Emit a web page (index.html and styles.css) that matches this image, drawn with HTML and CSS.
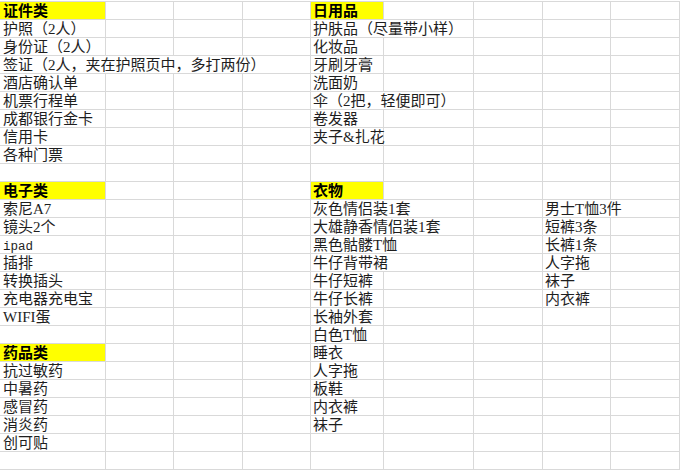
FILE: index.html
```html
<!DOCTYPE html>
<html lang="zh-CN">
<head>
<meta charset="utf-8">
<title>旅行清单</title>
<link rel="stylesheet" href="styles.css">
</head>
<body>
<div class="sheet">
<div class="c a h">证件类</div><div class="c"></div><div class="c"></div><div class="c"></div><div class="c h">日用品</div><div class="c"></div><div class="c"></div><div class="c"></div><div class="c"></div>
<div class="c a">护照（2人）</div><div class="c"></div><div class="c"></div><div class="c"></div><div class="c s2">护肤品（尽量带小样）</div><div class="c"></div><div class="c"></div><div class="c"></div>
<div class="c a">身份证（2人）</div><div class="c"></div><div class="c"></div><div class="c"></div><div class="c">化妆品</div><div class="c"></div><div class="c"></div><div class="c"></div><div class="c"></div>
<div class="c a s4">签证（2人，夹在护照页中，多打两份）</div><div class="c">牙刷牙膏</div><div class="c"></div><div class="c"></div><div class="c"></div><div class="c"></div>
<div class="c a">酒店确认单</div><div class="c"></div><div class="c"></div><div class="c"></div><div class="c">洗面奶</div><div class="c"></div><div class="c"></div><div class="c"></div><div class="c"></div>
<div class="c a">机票行程单</div><div class="c"></div><div class="c"></div><div class="c"></div><div class="c s2">伞（2把，轻便即可）</div><div class="c"></div><div class="c"></div><div class="c"></div>
<div class="c a">成都银行金卡</div><div class="c"></div><div class="c"></div><div class="c"></div><div class="c">卷发器</div><div class="c"></div><div class="c"></div><div class="c"></div><div class="c"></div>
<div class="c a">信用卡</div><div class="c"></div><div class="c"></div><div class="c"></div><div class="c">夹子&amp;扎花</div><div class="c"></div><div class="c"></div><div class="c"></div><div class="c"></div>
<div class="c a">各种门票</div><div class="c"></div><div class="c"></div><div class="c"></div><div class="c"></div><div class="c"></div><div class="c"></div><div class="c"></div><div class="c"></div>
<div class="c a"></div><div class="c"></div><div class="c"></div><div class="c"></div><div class="c"></div><div class="c"></div><div class="c"></div><div class="c"></div><div class="c"></div>
<div class="c a h">电子类</div><div class="c"></div><div class="c"></div><div class="c"></div><div class="c h">衣物</div><div class="c"></div><div class="c"></div><div class="c"></div><div class="c"></div>
<div class="c a">索尼A7</div><div class="c"></div><div class="c"></div><div class="c"></div><div class="c s2">灰色情侣装1套</div><div class="c"></div><div class="c s2">男士T恤3件</div>
<div class="c a">镜头2个</div><div class="c"></div><div class="c"></div><div class="c"></div><div class="c s2">大雄静香情侣装1套</div><div class="c"></div><div class="c">短裤3条</div><div class="c"></div>
<div class="c a"><span class="mono">ipad</span></div><div class="c"></div><div class="c"></div><div class="c"></div><div class="c s2">黑色骷髅T恤</div><div class="c"></div><div class="c">长裤1条</div><div class="c"></div>
<div class="c a">插排</div><div class="c"></div><div class="c"></div><div class="c"></div><div class="c s2">牛仔背带裙</div><div class="c"></div><div class="c">人字拖</div><div class="c"></div>
<div class="c a">转换插头</div><div class="c"></div><div class="c"></div><div class="c"></div><div class="c">牛仔短裤</div><div class="c"></div><div class="c"></div><div class="c">袜子</div><div class="c"></div>
<div class="c a">充电器充电宝</div><div class="c"></div><div class="c"></div><div class="c"></div><div class="c">牛仔长裤</div><div class="c"></div><div class="c"></div><div class="c">内衣裤</div><div class="c"></div>
<div class="c a">WIFI蛋</div><div class="c"></div><div class="c"></div><div class="c"></div><div class="c">长袖外套</div><div class="c"></div><div class="c"></div><div class="c"></div><div class="c"></div>
<div class="c a"></div><div class="c"></div><div class="c"></div><div class="c"></div><div class="c">白色T恤</div><div class="c"></div><div class="c"></div><div class="c"></div><div class="c"></div>
<div class="c a h">药品类</div><div class="c"></div><div class="c"></div><div class="c"></div><div class="c">睡衣</div><div class="c"></div><div class="c"></div><div class="c"></div><div class="c"></div>
<div class="c a">抗过敏药</div><div class="c"></div><div class="c"></div><div class="c"></div><div class="c">人字拖</div><div class="c"></div><div class="c"></div><div class="c"></div><div class="c"></div>
<div class="c a">中暑药</div><div class="c"></div><div class="c"></div><div class="c"></div><div class="c">板鞋</div><div class="c"></div><div class="c"></div><div class="c"></div><div class="c"></div>
<div class="c a">感冒药</div><div class="c"></div><div class="c"></div><div class="c"></div><div class="c">内衣裤</div><div class="c"></div><div class="c"></div><div class="c"></div><div class="c"></div>
<div class="c a">消炎药</div><div class="c"></div><div class="c"></div><div class="c"></div><div class="c">袜子</div><div class="c"></div><div class="c"></div><div class="c"></div><div class="c"></div>
<div class="c a">创可贴</div><div class="c"></div><div class="c"></div><div class="c"></div><div class="c"></div><div class="c"></div><div class="c"></div><div class="c"></div><div class="c"></div>
<div class="c a"></div><div class="c"></div><div class="c"></div><div class="c"></div><div class="c"></div><div class="c"></div><div class="c"></div><div class="c"></div><div class="c"></div>
</div>
</body>
</html>
```

FILE: styles.css
```css
html, body {
  margin: 0;
  padding: 0;
  background: #ffffff;
}

body {
  font-family: "Liberation Serif", "Noto Sans CJK SC", serif;
  font-size: 15px;
  color: #1e1e1e;
  overflow: hidden;
  text-spacing-trim: space-all;
}

.sheet {
  margin-top: 1px;
  width: 680px;
  display: grid;
  grid-template-columns: 106px 68px 69px 68px 73px 90px 69px 68px 69px;
  grid-auto-rows: 18px;
  border-top: 1px solid #d9d9d9;
}

.c {
  box-sizing: border-box;
  border-right: 1px solid #d9d9d9;
  border-bottom: 1px solid #d9d9d9;
  padding: 1px 0 0 2px;
  line-height: 16px;
  white-space: nowrap;
  overflow: visible;
}

.a {
  padding-left: 3px;
}

.h {
  background: #ffff00;
  font-weight: bold;
  color: #000000;
}

.mono {
  font-family: "Liberation Mono", monospace;
  font-size: 12.5px;
}

.s2 {
  grid-column: span 2;
}

.s4 {
  grid-column: span 4;
}
```
